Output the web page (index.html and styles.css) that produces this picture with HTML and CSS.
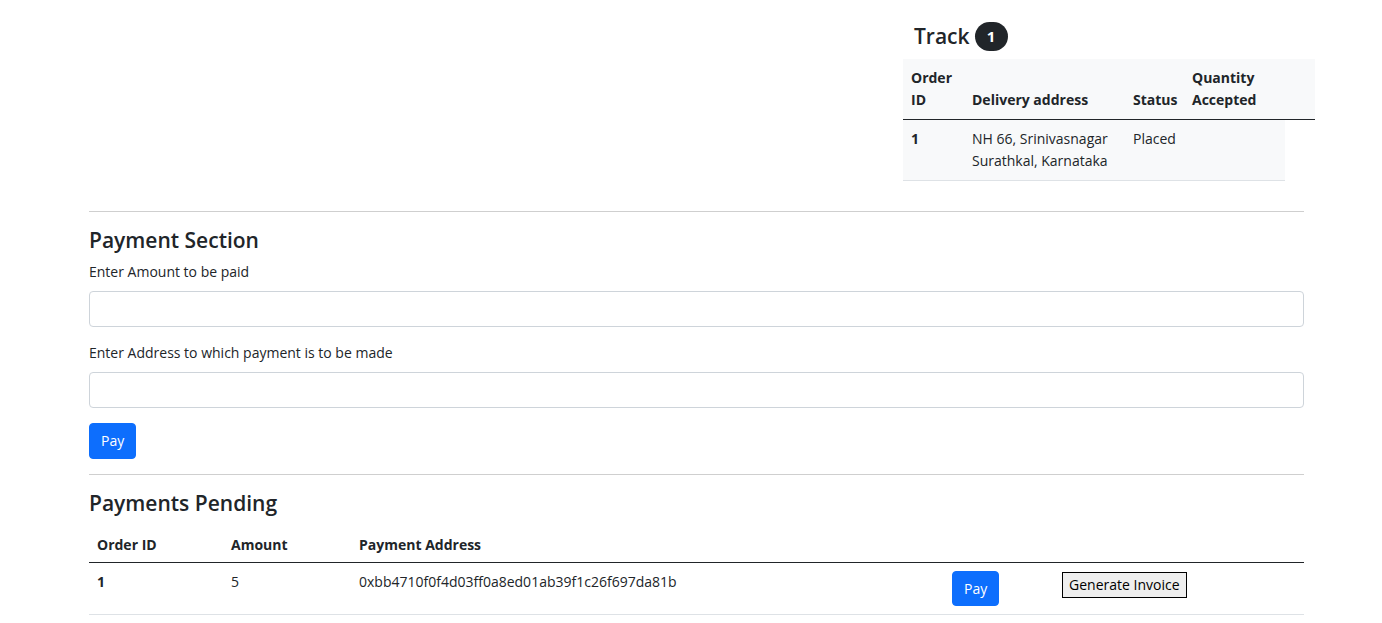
FILE: index.html
```html
<!DOCTYPE html>
<html>
<head>
<meta charset="utf-8">
<link rel="stylesheet" href="styles.css">
</head>
<body>
<div class="top">
  <div class="track">
    <h3 class="track-title">Track <span class="badge">1</span></h3>
    <table class="track-table">
      <colgroup><col class="c1"><col class="c2"><col class="c3"><col class="c4"><col class="c5"></colgroup>
      <thead>
        <tr><th>Order ID</th><th>Delivery address</th><th>Status</th><th>Quantity Accepted</th><th></th></tr>
      </thead>
      <tbody>
        <tr><td class="bold">1</td><td>NH 66, Srinivasnagar Surathkal, Karnataka</td><td>Placed</td><td></td></tr>
      </tbody>
    </table>
  </div>
</div>
<div class="container">
  <hr class="rule first">
  <h4 class="heading">Payment Section</h4>
  <label class="label">Enter Amount to be paid</label>
  <input class="input" type="text">
  <label class="label second">Enter Address to which payment is to be made</label>
  <input class="input" type="text">
  <button class="btn-primary">Pay</button>
  <hr class="rule">
  <h4 class="heading pending">Payments Pending</h4>
  <table class="pay-table">
    <colgroup><col class="p1"><col class="p2"><col class="p3"><col class="p4"><col class="p5"></colgroup>
    <thead>
      <tr><th>Order ID</th><th>Amount</th><th>Payment Address</th><th></th><th></th></tr>
    </thead>
    <tbody>
      <tr><td class="bold">1</td><td>5</td><td>0xbb4710f0f4d03ff0a8ed01ab39f1c26f697da81b</td><td><button class="btn-primary">Pay</button></td><td><button class="btn-plain">Generate Invoice</button></td></tr>
    </tbody>
  </table>
</div>
</body>
</html>
```
FILE: styles.css
```css
* { box-sizing: border-box; }
body {
  margin: 0;
  font-family: "Open Sans", "Noto Sans", sans-serif;
  font-size: 14px;
  line-height: 22px;
  color: #212529;
  background: #fff;
}
.top { display: flex; padding-top: 22px; }
.track { margin-left: 903px; width: 412px; }
.track-title {
  margin: 0 0 8px 0;
  padding-left: 11px;
  font-size: 21px;
  font-weight: 600;
  line-height: 29px;
  display: flex;
  align-items: center;
  gap: 5px;
}
.badge {
  display: inline-flex;
  align-items: center;
  justify-content: center;
  width: 33px;
  height: 29px;
  border-radius: 15px;
  background: #212529;
  color: #fff;
  font-size: 15px;
  font-weight: 700;
}
table { border-collapse: collapse; table-layout: fixed; }
th, td { padding: 8px; text-align: left; vertical-align: top; }
th { font-weight: 700; vertical-align: bottom; }
.bold { font-weight: 700; }
.track-table { width: 412px; }
.track-table thead th { background: #f8f9fa; border-bottom: 1px solid #212529; }
.track-table tbody td { background: #f8f9fa; border-bottom: 1px solid #dee2e6; }
.c1 { width: 61px; } .c2 { width: 161px; } .c3 { width: 59px; } .c4 { width: 101px; } .c5 { width: 30px; }
.container { margin-left: 89px; width: 1215px; padding-top: 30px; }
.rule { margin: 0 0 15px 0; border: 0; border-top: 1px solid #cfcfcf; }
.heading { margin: 0 0 8px 0; font-size: 21px; font-weight: 600; line-height: 26px; }
.heading.pending { margin-bottom: 10px; }
.label { display: block; margin-bottom: 8px; }
.label.second { margin-top: 15px; }
.input {
  display: block;
  width: 100%;
  height: 36px;
  border: 1px solid #ced4da;
  border-radius: 4px;
  background: #fff;
  font: inherit;
}
.btn-primary {
  margin-top: 15px;
  margin-bottom: 15px;
  height: 36px;
  padding: 0 11px;
  border: 1px solid #0d6efd;
  border-radius: 4px;
  background: #0d6efd;
  color: #fff;
  font: inherit;
}
.pay-table td .btn-primary { margin: 0; height: 35px; }
.pay-table { width: 1215px; }
.pay-table thead th { border-bottom: 1px solid #212529; padding-bottom: 6px; }
.pay-table tbody td { border-bottom: 1px solid #dee2e6; height: 50px; }
.p1 { width: 134px; } .p2 { width: 128px; } .p3 { width: 593px; } .p4 { width: 110px; } .p5 { width: 250px; }
.btn-plain {
  margin-top: 1px;
  height: 26px;
  padding: 0 6px;
  border: 1px solid #000;
  border-radius: 0;
  background: #efefef;
  color: #000;
  font: inherit;
  line-height: 22px;
}
```
